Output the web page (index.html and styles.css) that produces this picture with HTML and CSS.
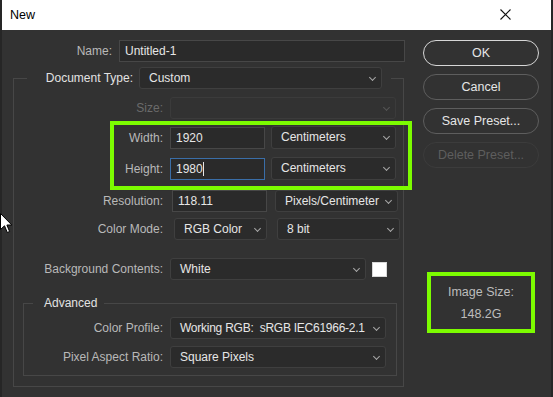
FILE: index.html
```html
<!DOCTYPE html>
<html lang="en">
<head>
  <meta charset="UTF-8">
  <title>New</title>
  <link rel="stylesheet" href="styles.css">
</head>
<body>
  <div class="window">
    <div class="titlebar">
      <span class="title">New</span>
      <svg class="close" width="11" height="11" viewBox="0 0 11 11"><path d="M0.5 0.5 L10.5 10.5 M10.5 0.5 L0.5 10.5" stroke="#111" stroke-width="1.1" fill="none"/></svg>
    </div>
    <div class="content">
      <div class="form">
        <div class="row name-row">
          <span class="lbl name-lbl">Name:</span>
          <div class="input name-input">Untitled-1</div>
        </div>

        <fieldset class="group">
          <legend class="group-legend">
            <span class="lbl doc-lbl">Document Type:</span>
            <div class="select doc-select">Custom<span class="chev"></span></div>
          </legend>

          <div class="row size-row">
            <span class="lbl disabled">Size:</span>
            <div class="select disabled-select full"><span class="chev"></span></div>
          </div>

          <div class="highlight">
            <div class="row">
              <span class="lbl">Width:</span>
              <div class="input short">1920</div>
              <div class="select unit">Centimeters<span class="chev"></span></div>
            </div>
            <div class="row height-row">
              <span class="lbl">Height:</span>
              <div class="input short focused">1980<span class="caret"></span></div>
              <div class="select unit">Centimeters<span class="chev"></span></div>
            </div>
          </div>

          <div class="row res-row">
            <span class="lbl">Resolution:</span>
            <div class="input short">118.11</div>
            <div class="select res-unit">Pixels/Centimeter<span class="chev"></span></div>
          </div>

          <div class="row mode-row">
            <span class="lbl">Color Mode:</span>
            <div class="select mode">RGB Color<span class="chev"></span></div>
            <div class="select res-unit">8 bit<span class="chev"></span></div>
          </div>

          <div class="row bg-row">
            <span class="lbl">Background Contents:</span>
            <div class="select bg">White<span class="chev"></span></div>
            <div class="swatch"></div>
          </div>

          <fieldset class="advanced">
            <legend class="adv-legend">Advanced</legend>
            <div class="row profile-row">
              <span class="lbl">Color Profile:</span>
              <div class="select wide profile">Working RGB:&nbsp; sRGB IEC61966-2.1<span class="chev"></span></div>
            </div>
            <div class="row pixel-row">
              <span class="lbl">Pixel Aspect Ratio:</span>
              <div class="select wide">Square Pixels<span class="chev"></span></div>
            </div>
          </fieldset>
        </fieldset>
      </div>

      <div class="side">
        <button class="btn primary">OK</button>
        <button class="btn">Cancel</button>
        <button class="btn">Save Preset...</button>
        <button class="btn off">Delete Preset...</button>
        <div class="image-size">
          <div>Image Size:</div>
          <div>148.2G</div>
        </div>
      </div>
    </div>

    <svg class="pointer" width="13" height="21" viewBox="0 0 13 21"><path d="M0.5 0.5 L0.5 16.5 L4.5 12.8 L7.3 19.5 L9.6 18.5 L6.9 12 L11.8 12 Z" fill="#fff" stroke="#000" stroke-width="1"/></svg>
  </div>
</body>
</html>
```

FILE: styles.css
```css
html, body {
  margin: 0;
  padding: 0;
}
body {
  width: 553px;
  height: 397px;
  overflow: hidden;
  background: #323232;
  font-family: 'Liberation Sans', Arial, sans-serif;
  font-size: 12px;
  color: #e2e2e2;
}
.window {
  position: relative;
  height: 397px;
  border-left: 2px solid #262626;
  border-right: 2px solid #262626;
  box-sizing: border-box;
}
.titlebar {
  height: 30px;
  background: #fff;
  display: flex;
  align-items: center;
  justify-content: space-between;
  padding: 0 40px 0 8px;
}
.title {
  color: #000;
  font-size: 12.5px;
}
.close {
  margin-top: -1px;
}
.content {
  display: flex;
}
.form {
  width: 408px;
  flex-shrink: 0;
}
.row {
  display: flex;
  align-items: center;
  gap: 6px;
  height: 22px;
}
.lbl {
  flex-shrink: 0;
  text-align: right;
  color: #b9b9b9;
  margin-right: 1px;
}
.lbl.disabled {
  color: #6b6b6b;
}
.name-row {
  margin-top: 10px;
}
.name-lbl {
  width: 110px;
}
.input {
  box-sizing: border-box;
  height: 22px;
  line-height: 20px;
  padding: 0 5px;
  background: #2a2a2a;
  border: 1px solid #474747;
  color: #e6e6e6;
  white-space: nowrap;
}
.name-input {
  width: 286px;
}
.input.short {
  width: 95px;
}
.input.focused {
  border-color: #3a6ea8;
}
.caret {
  display: inline-block;
  width: 1px;
  height: 14px;
  background: #e6e6e6;
  vertical-align: -3px;
}
.select {
  position: relative;
  box-sizing: border-box;
  height: 22px;
  line-height: 20px;
  padding: 0 18px 0 9px;
  background: #2b2b2b;
  border: 1px solid #3f3f3f;
  border-radius: 3px;
  color: #e6e6e6;
  white-space: nowrap;
  overflow: hidden;
}
.chev {
  position: absolute;
  right: 6px;
  top: 7px;
  width: 4px;
  height: 4px;
  border-right: 1px solid #a8a8a8;
  border-bottom: 1px solid #a8a8a8;
  transform: rotate(45deg);
}
.group {
  margin: 5px 0 0 11px;
  padding: 0 0 10px 0;
  width: 391px;
  box-sizing: border-box;
  border: 1px solid #474747;
  min-inline-size: 0;
}
.group-legend {
  display: flex;
  align-items: center;
  gap: 6px;
  margin-left: 13px;
  padding: 0 9px 0 15px;
}
.doc-lbl {
  width: 91px;
  color: #e2e2e2;
  margin-right: 0;
}
.doc-select {
  width: 243px;
}
.group > .row .lbl {
  width: 149px;
}
.size-row {
  margin-top: 8px;
}
.disabled-select {
  background: #323232;
  border-color: #3b3b3b;
}
.disabled-select .chev {
  border-color: #555;
}
.full {
  width: 226px;
}
.highlight {
  box-sizing: border-box;
  width: 302px;
  margin: 2px 0 0 96px;
  padding: 1px 0 6px 0;
  border: 4px solid #7cfc00;
}
.highlight .row {
  height: 23px;
}
.highlight .lbl {
  width: 49px;
}
.highlight .select {
  height: 23px;
}
.height-row {
  margin-top: 8px;
}
.select.unit {
  width: 125px;
}
.select.res-unit {
  width: 123px;
}
.res-row {
  margin-top: 0;
  gap: 8px;
}
.mode-row {
  margin-top: 6px;
  gap: 10px;
}
.select.mode {
  width: 93px;
}
.bg-row {
  margin-top: 18px;
}
.select.bg {
  width: 196px;
}
.swatch {
  width: 15px;
  height: 15px;
  background: #fff;
  box-sizing: border-box;
  border: 1px solid #d8d8d8;
}
.advanced {
  margin: 16px 6px 0 9px;
  padding: 0 0 7px 0;
  border: 1px solid #474747;
  min-inline-size: 0;
}
.adv-legend {
  margin-left: 9px;
  padding: 0 7px 0 11px;
  color: #e2e2e2;
  line-height: 15px;
}
.advanced .lbl {
  width: 139px;
}
.profile-row {
  margin-top: 6px;
}
.pixel-row {
  margin-top: 7px;
}
.select.wide {
  width: 216px;
}
.select.profile {
  letter-spacing: -0.25px;
}
.side {
  display: flex;
  flex-direction: column;
  gap: 8px;
  width: 116px;
  margin-left: 13px;
  padding-top: 10px;
}
.btn {
  height: 26px;
  border-radius: 13px;
  border: 1px solid #5e5e5e;
  background: #323232;
  color: #e6e6e6;
  font-family: 'Liberation Sans', Arial, sans-serif;
  font-size: 12.5px;
  padding: 0;
}
.btn.primary {
  border-color: #d6d6d6;
}
.btn.off {
  border-color: #3c3c3c;
  color: #5e5e5e;
}
.image-size {
  box-sizing: border-box;
  width: 108px;
  height: 61px;
  margin: 96px 0 0 4px;
  border: 4px solid #7cfc00;
  display: flex;
  flex-direction: column;
  align-items: center;
  justify-content: center;
  gap: 8px;
  color: #bdbdbd;
  font-size: 12.5px;
}
.pointer {
  position: absolute;
  left: -2px;
  top: 213px;
}
```
